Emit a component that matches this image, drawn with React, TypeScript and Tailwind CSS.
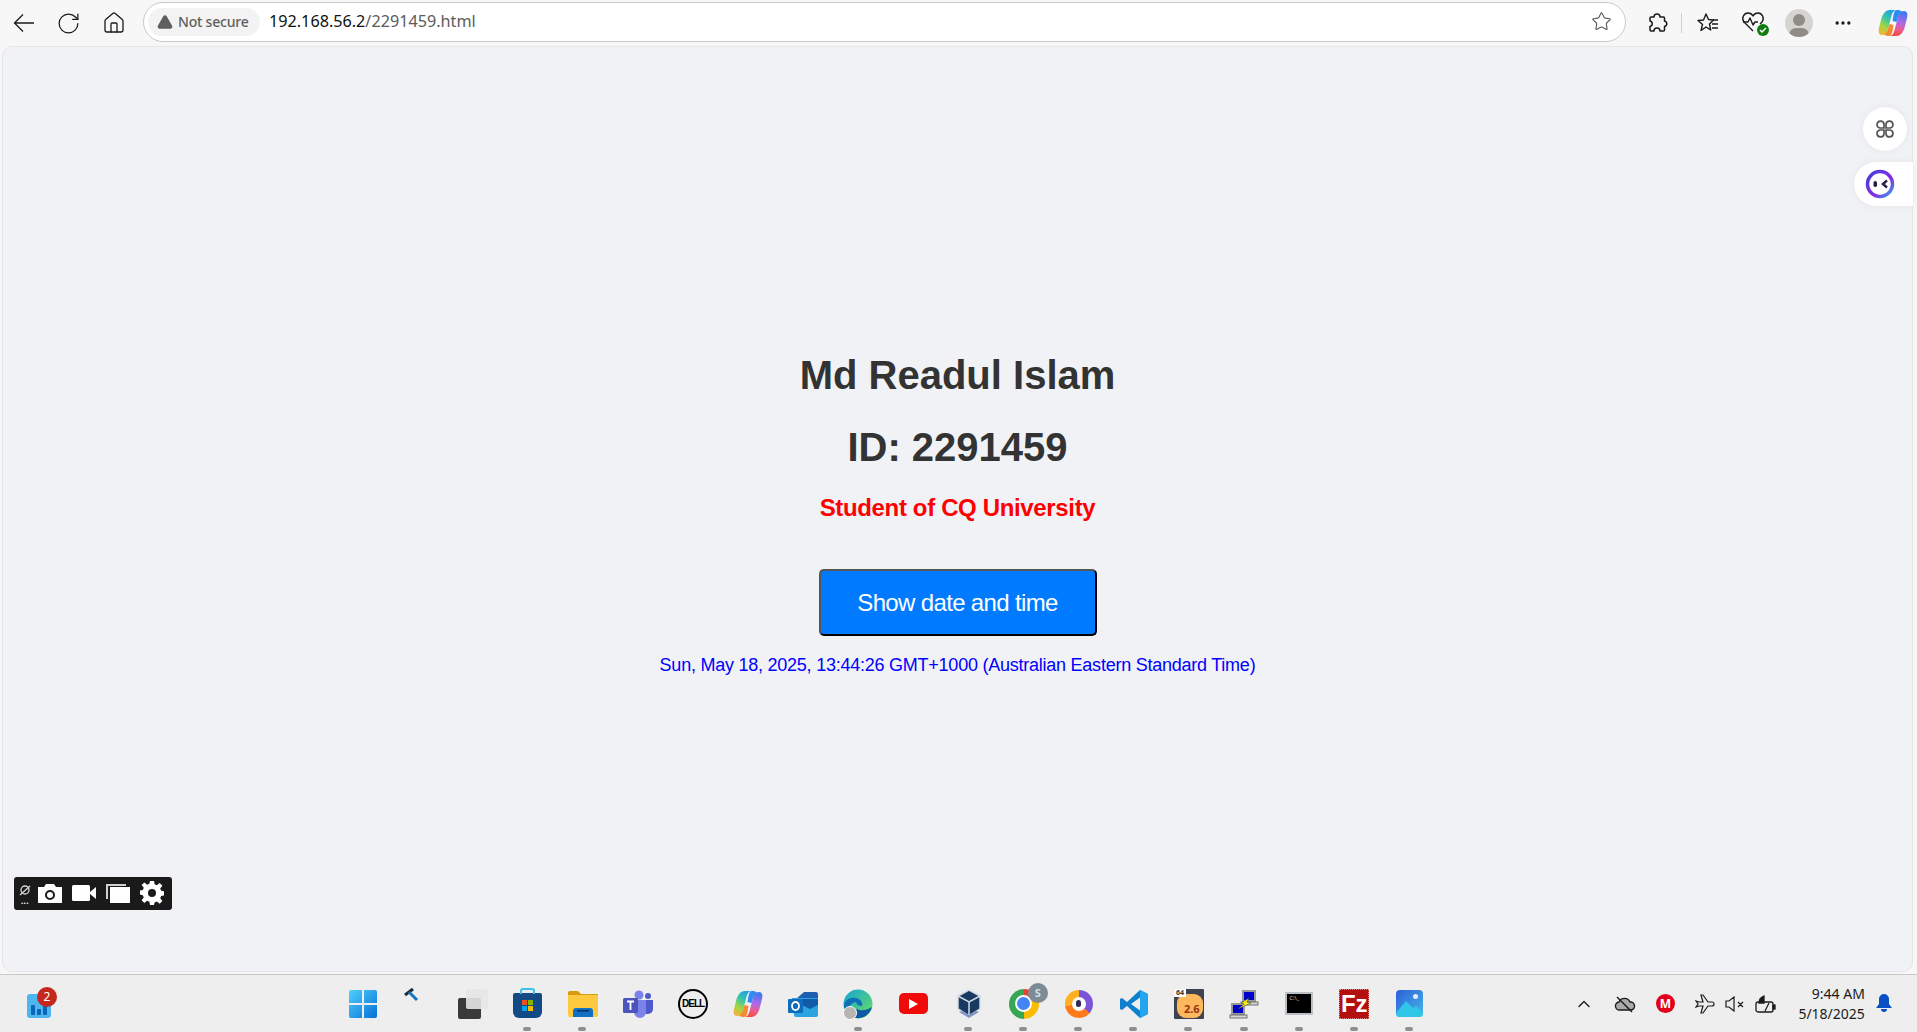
import { ChevronUp, Ellipsis, Home, RotateCw, Star, TriangleAlert } from "lucide-react";
import type { ReactNode } from "react";

function Cell({ dot, children }: { dot?: boolean; children: ReactNode }) {
  return (
    <div className="relative w-[55.1px] h-[58px] flex items-center justify-center shrink-0">
      {children}
      {dot && <span className="absolute bottom-[2px] left-[23px] w-[8px] h-[4px] rounded-full bg-[#8f8f8f]" />}
    </div>
  );
}

function CopilotLogo({ size = 30 }: { size?: number }) {
  return (
    <svg width={size} height={size} viewBox="0 0 30 30">
      <defs>
        <linearGradient id="cpa" x1="0.7" y1="0" x2="0.2" y2="1">
          <stop offset="0" stopColor="#1f9fe8" />
          <stop offset="0.4" stopColor="#3fc8a0" />
          <stop offset="0.7" stopColor="#a6d63e" />
          <stop offset="1" stopColor="#f7b13a" />
        </linearGradient>
        <linearGradient id="cpb" x1="0.6" y1="0" x2="0.4" y2="1">
          <stop offset="0" stopColor="#3a78ee" />
          <stop offset="0.45" stopColor="#b068e8" />
          <stop offset="0.75" stopColor="#ef5a8a" />
          <stop offset="1" stopColor="#f24a3a" />
        </linearGradient>
      </defs>
      <path d="M12 2h7c-3 0-4.500 2-5.300 5L10 21c-.8 3-2.500 6-6 6-3 0-4-3-3-7l2-8c1-5 4-10 9-10z" fill="url(#cpa)" />
      <path d="M18 28h-7c3 0 4.500-2 5.300-5L20 9c.8-3 2.500-6 6-6 3 0 4 3 3 7l-2 8c-1 5-4 10-9 10z" fill="url(#cpb)" />
      <path d="M19 2c2.500 0 4 .6 5 2-2 .5-3.200 2.500-4 5l-1.500 5-4-1 1-6c.6-3 1.500-5 3.500-5z" fill="#2c8cf0" />
      <path d="M11 28c-2.500 0-4-.6-5-2 2-.5 3.200-2.500 4-5l1.500-5 4 1-1 6c-.6 3-1.500 5-3.500 5z" fill="#f58a2e" />
    </svg>
  );
}

function BrowserBar() {
  return (
    <header className="h-[46px] flex items-center shrink-0 text-[#1b1b1b]">
      <div className="w-[45px] ml-[1px] flex justify-center">
        <svg width="22" height="20" viewBox="0 0 22 20" fill="none" stroke="#1b1b1b" strokeWidth="1.300">
          <path d="M21 10H1.500M10 1.500L1.500 10l8.500 8.500" />
        </svg>
      </div>
      <div className="w-[45px] flex justify-center"><RotateCw size={25} strokeWidth={1.2} /></div>
      <div className="w-[45px] flex justify-center"><Home size={24} strokeWidth={1.3} /></div>
      <div className="ml-[7px] w-[1483px] h-[40px] mt-[-3px] rounded-full bg-white border border-[#c9c9c9] flex items-center pl-[4px] pr-[13px]">
        <div className="h-[28px] w-[112px] rounded-full bg-[#f3f3f3] flex items-center pl-[9px] gap-[5px] text-[#5f5f5f] text-[14px] font-medium whitespace-nowrap">
          <TriangleAlert size={16} fill="#5f5f5f" stroke="#5f5f5f" className="shrink-0" />
          <span className="tracking-[-0.2px]">Not secure</span>
        </div>
        <div className="ml-[9px] text-[16.2px] text-[#5b5b5b]">
          <span className="text-[#111111]">192.168.56.2</span>/2291459.html
        </div>
        <Star size={21} strokeWidth={1.3} className="ml-auto text-[#5c5c5c]" />
      </div>
      <div className="ml-[20px] w-[22px] flex justify-center">
        <svg width="22" height="22" viewBox="0 0 22 22" fill="none" stroke="#1b1b1b" strokeWidth="1.5" strokeLinejoin="round">
          <path d="M8 5a3 3 0 0 1 6 0h3.500a1 1 0 0 1 1 1v3a2.800 2.800 0 0 1 0 5.500V18a1 1 0 0 1-1 1H14a3 3 0 0 0-6 0H5a1 1 0 0 1-1-1v-3.500a2.800 2.800 0 0 0 0-5.500V6a1 1 0 0 1 1-1z" />
        </svg>
      </div>
      <div className="ml-[13px] w-px h-[20px] bg-[#d0d0d0]" />
      <div className="ml-[14px] w-[24px]">
        <svg width="24" height="22" viewBox="0 0 24 22" fill="none" stroke="#1b1b1b" strokeWidth="1.4" strokeLinejoin="round">
          <path d="M10 2l2.500 5.500 5 .5-4 4 1.200 6L10 15l-5 3.500 1.500-6-4.500-4 5.500-.5z" />
          <path d="M17 8h5M16 12h6M16 16h6" />
        </svg>
      </div>
      <div className="ml-[21px] relative w-[26px] h-[26px]">
        <svg width="24" height="22" viewBox="0 0 24 22" fill="none" stroke="#1b1b1b" strokeWidth="1.4" strokeLinejoin="round" className="mt-[1px]">
          <path d="M12 20L3 11C0 7 3 2 7 2c2 0 4 1 5 3 1-2 3-3 5-3 4 0 7 5 4 9l-2 2" />
          <path d="M2 11h5l2-4 3 7 2-3h3" />
        </svg>
        <span className="absolute right-[-2px] bottom-[0px] w-[12px] h-[12px] rounded-full bg-[#107c10] flex items-center justify-center">
          <svg width="8" height="8" viewBox="0 0 8 8" fill="none" stroke="white" strokeWidth="1.500"><path d="M1 4l2 2 4-4" /></svg>
        </span>
      </div>
      <div className="ml-[18px] w-[28px] h-[28px] rounded-full bg-[#d6d4d1] relative overflow-hidden">
        <span className="absolute left-[8px] top-[5px] w-[12px] h-[12px] rounded-full bg-[#8f8b87]" />
        <span className="absolute left-[4px] top-[19px] w-[20px] h-[14px] rounded-full bg-[#8f8b87]" />
      </div>
      <div className="ml-[18px] w-[24px] flex justify-center"><Ellipsis size={20} strokeWidth={2} /></div>
      <div className="ml-[23px]"><CopilotLogo /></div>
    </header>
  );
}

function CaptureToolbar() {
  return (
    <div className="absolute left-[14px] top-[877px] w-[158px] h-[33px] rounded-[3px] bg-[#1a1a1a] flex items-center pl-[5px] gap-[7px]">
      <div className="w-[12px] flex flex-col items-center gap-[2px]">
        <svg width="12" height="12" viewBox="0 0 12 12" fill="none" stroke="#d8d8d8" strokeWidth="1.300"><circle cx="6" cy="6" r="4" /><path d="M1 11l10-9" /></svg>
        <span className="text-[8px] leading-[5px] font-bold text-white tracking-[0.5px]">...</span>
      </div>
      <svg width="24" height="20" viewBox="0 0 24 20" fill="white" className="mt-[-2px]">
        <path fillRule="evenodd" d="M0 4h6l2-3h8l2 3h6v16H0zM12 7a5 5 0 1 0 0 10 5 5 0 0 0 0-10zm0 2a3 3 0 1 1 0 6 3 3 0 0 1 0-6z" />
      </svg>
      <svg width="24" height="16" viewBox="0 0 24 16" fill="white" className="ml-[3px] mt-[-2px]"><rect width="18" height="16" rx="1.500" /><path d="M18 7l6-5v12l-6-5z" /></svg>
      <svg width="24" height="20" viewBox="0 0 24 20" className="ml-[3px] mt-[-2px]">
        <path d="M0 1h20v2H2v13H0z" fill="#d0d0d0" />
        <rect x="4" y="4" width="20" height="16" fill="white" />
      </svg>
      <svg width="24" height="24" viewBox="0 0 24 24" fill="white" className="ml-[3px] mt-[-2px]">
        <path fillRule="evenodd" d="M10 0h4l.6 3.200 2.300 1L19.600 2l2.800 2.800-2.200 2.700 1 2.300 3.200.6v4l-3.200.6-1 2.300 2.200 2.700-2.800 2.800-2.700-2.200-2.300 1L14 24h-4l-.6-3.200-2.300-1L4.400 22l-2.800-2.800 2.200-2.700-1-2.300L0 13.600v-4l2.800-.6 1-2.300L1.600 4 4.400 1.600l2.700 2.200 2.300-1zM12 8a4 4 0 1 0 0 8 4 4 0 0 0 0-8z" />
      </svg>
    </div>
  );
}

function SideButtons() {
  return (
    <>
      <div className="absolute left-[1863px] top-[107px] w-[44px] h-[44px] rounded-full bg-white shadow-[0_0_8px_rgba(0,0,0,0.06)] flex items-center justify-center">
        <svg width="20" height="20" viewBox="0 0 20 20" fill="none" stroke="#555555" strokeWidth="1.700">
          <path d="M9 9H5a3.500 3.500 0 1 1 4-4zM11 9h4a3.500 3.500 0 1 0-4-4zM9 11H5a3.500 3.500 0 1 0 4 4zM11 11h4a3.500 3.500 0 1 1-4 4z" />
        </svg>
      </div>
      <div className="absolute left-[1854px] top-[162px] w-[59px] h-[44px] rounded-l-full bg-white shadow-[0_0_8px_rgba(0,0,0,0.06)] flex items-center pl-[11px]">
        <svg width="30" height="30" viewBox="0 0 30 30">
          <defs>
            <linearGradient id="ring" x1="0" y1="0" x2="1" y2="1">
              <stop offset="0" stopColor="#3f3fe0" />
              <stop offset="0.6" stopColor="#8a2be2" />
              <stop offset="1" stopColor="#2ea8e8" />
            </linearGradient>
          </defs>
          <circle cx="15" cy="15" r="12.500" fill="white" stroke="url(#ring)" strokeWidth="3.500" />
          <rect x="8.500" y="12" width="3.500" height="6" rx="1.700" fill="#222244" />
          <path d="M22 11.500l-4 3.500 4 3.500" fill="none" stroke="#222244" strokeWidth="2.400" />
        </svg>
      </div>
    </>
  );
}

function Taskbar() {
  return (
    <footer className="h-[58px] shrink-0 bg-[#eeeeee] border-t border-[#c8c8c8] flex items-center">
      <div className="ml-[27px] relative w-[24px] h-[24px] mt-[4px] rounded-[3px] bg-[#4db5f0] flex items-end justify-center gap-[2px] pb-[3px]">
        <span className="w-[4px] h-[10px] bg-[#0a66b8] rounded-[1px]" />
        <span className="w-[4px] h-[6px] bg-[#0a66b8] rounded-[1px]" />
        <span className="w-[4px] h-[14px] bg-[#0a66b8] rounded-[1px]" />
        <span className="absolute left-[10px] top-[-7px] w-[20px] h-[20px] rounded-full bg-[#c4281c] text-white text-[12px] leading-[20px] text-center font-['Noto_Sans',sans-serif]">2</span>
      </div>
      <div className="ml-[284px] flex">
        <Cell>
          <svg width="30" height="30" viewBox="0 0 30 30">
            <defs><linearGradient id="win" x1="0" y1="0" x2="1" y2="1"><stop offset="0" stopColor="#4fd0fb" /><stop offset="1" stopColor="#0670d6" /></linearGradient></defs>
            <path d="M1 3a2 2 0 0 1 2-2h11v13H1zM16 1h11a2 2 0 0 1 2 2v11H16zM1 16h13v13H3a2 2 0 0 1-2-2zM16 16h13v11a2 2 0 0 1-2 2H16z" fill="url(#win)" />
          </svg>
        </Cell>
        <Cell>
          <svg width="16" height="16" viewBox="0 0 16 16" className="mt-[-18px] ml-[-12px]" fill="none" strokeWidth="3">
            <path d="M1 8l8-6" stroke="#1f2a3a" /><path d="M5 5l8 8" stroke="#1273c4" />
          </svg>
        </Cell>
        <Cell>
          <div className="relative w-[30px] h-[30px]">
            <span className="absolute left-0 bottom-0 w-[23px] h-[21px] rounded-[2px] bg-[#3a3a3a]" />
            <span className="absolute right-0 top-0 w-[22px] h-[20px] rounded-[2px] bg-[#e6e6e6]/90" />
          </div>
        </Cell>
        <Cell dot>
          <div className="relative w-[29px] h-[25px] mt-[4px] rounded-b-[6px] rounded-t-[2px] bg-[#134a86] flex items-center justify-center">
            <span className="absolute left-[7px] top-[-5px] w-[15px] h-[6px] border-2 border-b-0 border-[#38c0f0] rounded-t-[3px]" />
            <div className="grid grid-cols-2 gap-[1px] w-[11px] h-[11px]">
              <span className="bg-[#f25022]" /><span className="bg-[#7fba00]" /><span className="bg-[#00a4ef]" /><span className="bg-[#ffb900]" />
            </div>
          </div>
        </Cell>
        <Cell dot>
          <svg width="30" height="27" viewBox="0 0 30 27">
            <path d="M0 3a2 2 0 0 1 2-2h8l3 3h17v4H0z" fill="#d99a0b" />
            <path d="M0 5h30v20a2 2 0 0 1-2 2H2a2 2 0 0 1-2-2z" fill="#fcc93f" />
            <path d="M5 27v-6a3 3 0 0 1 3-3h14a3 3 0 0 1 3 3v6z" fill="#0f70c4" />
            <rect x="9" y="20" width="12" height="1.500" fill="#052f5a" />
          </svg>
        </Cell>
        <Cell>
          <svg width="30" height="28" viewBox="0 0 30 28">
            <circle cx="16" cy="5" r="4.500" fill="#7b83eb" /><circle cx="25" cy="6" r="3" fill="#5059c9" />
            <path d="M20 10h10v9a5 5 0 0 1-5 5h-5z" fill="#5059c9" />
            <path d="M8 10h15v12a6 6 0 0 1-12 0z" fill="#7b83eb" />
            <rect y="8" width="15" height="15" rx="1.500" fill="#4b53bc" />
            <path d="M4 11.500h7M7.500 11.500V20" stroke="white" strokeWidth="1.800" />
          </svg>
        </Cell>
        <Cell>
          <div className="w-[30px] h-[30px] rounded-full border-2 border-black flex items-center justify-center font-['Liberation_Sans',sans-serif] font-bold text-[10px] tracking-[-1px] text-black">DELL</div>
        </Cell>
        <Cell><CopilotLogo /></Cell>
        <Cell>
          <svg width="30" height="26" viewBox="0 0 30 26">
            <path d="M8 8l8-7h12a2 2 0 0 1 2 2v5z" fill="#1e5fb0" />
            <path d="M4 7h26v17a2 2 0 0 1-2 2H8a2 2 0 0 1-2-2z" fill="#2aa3e0" />
            <path d="M14 8h16v6l-8 4-8-4z" fill="#125aa8" />
            <rect y="8" width="15" height="14" rx="1" fill="#0f6cbd" />
            <ellipse cx="7.500" cy="15" rx="3.500" ry="4" fill="none" stroke="white" strokeWidth="1.800" />
          </svg>
        </Cell>
        <Cell dot>
          <div className="relative">
            <svg width="30" height="30" viewBox="0 0 30 30">
              <defs><linearGradient id="edge" x1="0" y1="0" x2="1" y2="1"><stop offset="0" stopColor="#12a4d8" /><stop offset="1" stopColor="#6fe05a" /></linearGradient></defs>
              <circle cx="15" cy="15" r="14.500" fill="url(#edge)" />
              <path d="M1 16C2 10 8 8 13 9c5 1 7 5 6 8-3 0-5-1-6-4-5 1-9 4-6 13-4-2-6-6-6-10z" fill="#0f6fb8" />
              <path d="M14 20c3 2 9 2 15-2-2 7-8 12-16 11-3-1-2-6 1-9z" fill="#0c59a4" />
            </svg>
            <span className="absolute left-[0px] bottom-[-1px] w-[14px] h-[14px] rounded-full bg-[#b8b4b0] border border-white" />
          </div>
        </Cell>
        <Cell>
          <div className="w-[29px] h-[21px] rounded-[5px] bg-[#f00a0a] flex items-center justify-center">
            <svg width="9" height="10" viewBox="0 0 9 10" fill="white"><path d="M0 0l9 5-9 5z" /></svg>
          </div>
        </Cell>
        <Cell dot>
          <svg width="28" height="31" viewBox="0 0 28 31">
            <path d="M3 8l11-6 11 6v13l-11 7-11-7z" fill="#183a61" stroke="#d3dbe6" strokeWidth="1.500" />
            <path d="M3 8l11 6 11-6M14 14v14" stroke="#d3dbe6" strokeWidth="1.500" fill="none" />
            <path d="M4 24l10 6 10-6-3-1-7 4-7-4z" fill="#7f94c8" />
          </svg>
        </Cell>
        <Cell dot>
          <div className="relative">
            <div className="w-[30px] h-[30px] rounded-full bg-[conic-gradient(#ea4335_-60deg,#ea4335_60deg,#fbbc05_60deg,#fbbc05_180deg,#34a853_180deg,#34a853_300deg)] flex items-center justify-center">
              <span className="w-[13px] h-[13px] rounded-full bg-[#4285f4] border-2 border-white box-content" />
            </div>
            <span className="absolute right-[-9px] top-[-6px] w-[20px] h-[20px] rounded-full bg-[#7d8b96] text-[#d6dde2] text-[11px] leading-[20px] text-center font-bold">S</span>
          </div>
        </Cell>
        <Cell dot>
          <div className="w-[28px] h-[28px] rounded-full bg-[conic-gradient(#7a55d8_0deg,#7a55d8_130deg,#ff7a1a_130deg,#ff7a1a_260deg,#ffb01f_260deg,#ffb01f_360deg)] flex items-center justify-center">
            <span className="w-[14px] h-[14px] rounded-full bg-white flex items-center justify-center"><span className="w-[5px] h-[7px] rounded-full bg-[#33275c]" /></span>
          </div>
        </Cell>
        <Cell dot>
          <svg width="30" height="30" viewBox="0 0 30 30">
            <path d="M21 1l8 4v20l-8 4-13-12-5 4-2-1V10l2-1 5 4z" fill="#0e7fcf" />
            <path d="M21 1l8 4v20l-8 4z" fill="#22a4ee" />
            <path d="M21 8.500L12 15l9 6.500z" fill="#eeeeee" />
          </svg>
        </Cell>
        <Cell dot>
          <div className="relative w-[30px] h-[30px] bg-[#3f4350] rounded-[1px] overflow-hidden">
            <span className="absolute left-[3px] top-[5px] w-[26px] h-[24px] rounded-[9px] bg-[#fcb85c]" />
            <span className="absolute left-[10px] top-[13px] text-[11px] leading-[14px] font-bold text-[#9a3412]">2.6</span>
            <span className="absolute left-0 top-0 w-[12px] h-[8px] bg-white text-[7px] leading-[8px] text-center text-[#333333] font-bold">64</span>
          </div>
        </Cell>
        <Cell dot>
          <svg width="30" height="30" viewBox="0 0 30 30">
            <rect x="14" y="2" width="12" height="10" fill="#0000cc" stroke="#9a9a9a" strokeWidth="2" />
            <rect x="12" y="13" width="17" height="3" fill="#d6d6d6" stroke="#555555" strokeWidth="0.800" />
            <rect x="3" y="15" width="12" height="10" fill="#0000cc" stroke="#9a9a9a" strokeWidth="2" />
            <rect x="1" y="26" width="17" height="3" fill="#d6d6d6" stroke="#555555" strokeWidth="0.800" />
            <path d="M20 9l-8 5 3 1-6 5 13-6-4-1z" fill="#f5e71c" stroke="#333333" strokeWidth="0.500" />
          </svg>
        </Cell>
        <Cell dot>
          <div className="w-[28px] h-[23px] bg-black border-2 border-[#b9bec4] rounded-[1px] px-[2px]">
            <span className="block text-[#d0d0d0] text-[6px] leading-[8px]">C:\_</span>
          </div>
        </Cell>
        <Cell dot>
          <div className="w-[30px] h-[30px] bg-[#b30f0f] border border-dotted border-[#e08a8a] flex items-center justify-center text-white text-[24px] leading-none font-bold font-['Liberation_Sans',sans-serif]">Fz</div>
        </Cell>
        <Cell dot>
          <svg width="27" height="27" viewBox="0 0 27 27">
            <defs><linearGradient id="pho" x1="0" y1="0" x2="1" y2="1"><stop offset="0" stopColor="#2e5fd8" /><stop offset="1" stopColor="#45b8ea" /></linearGradient></defs>
            <rect width="27" height="27" rx="4" fill="url(#pho)" />
            <circle cx="19.500" cy="6.500" r="2.500" fill="#e4ecfb" />
            <path d="M0 23l10-12 7 7 3-2 7 7v0a4 4 0 0 1-4 4H4a4 4 0 0 1-4-4z" fill="#2fc6e8" />
          </svg>
        </Cell>
      </div>
      <div className="ml-[137px] flex items-center h-full text-[#1b1b1b]">
        <ChevronUp size={20} strokeWidth={1.6} />
        <svg width="22" height="18" viewBox="0 0 22 18" fill="none" stroke="#1b1b1b" strokeWidth="1.400" className="ml-[20px]">
          <path d="M6 15a4 4 0 0 1-1-8 6 6 0 0 1 11 0 4 4 0 0 1 1 8z" fill="#aaaaaa" /><path d="M3 2l15 15" />
        </svg>
        <span className="ml-[20px] w-[19px] h-[19px] rounded-full bg-[#e2001a] text-white text-[12px] leading-[19px] text-center font-bold">M</span>
        <svg width="20" height="20" viewBox="0 0 20 20" fill="none" stroke="#1b1b1b" strokeWidth="1.200" className="ml-[20px]">
          <path d="M1 7l2 3-2 3 3-1h4l-2 7h2l5-7h4a2 2 0 0 0 0-4h-4L8 1H6l2 7H4z" />
        </svg>
        <svg width="20" height="16" viewBox="0 0 20 16" fill="none" stroke="#1b1b1b" strokeWidth="1.200" className="ml-[10px]">
          <path d="M1 5h3l5-4v14l-5-4H1zM13 6l5 5M18 6l-5 5" />
        </svg>
        <svg width="21" height="18" viewBox="0 0 21 18" fill="none" stroke="#1b1b1b" strokeWidth="1.300" className="ml-[10px]">
          <rect x="1" y="7" width="17" height="10" rx="2" /><rect x="18" y="10" width="2" height="4" fill="#1b1b1b" /><path d="M9 8L4 8c0-3 2-6 5-7z" fill="#1b1b1b" /><path d="M10 16l4-8" stroke="#1b1b1b" />
        </svg>
        <div className="ml-[10px] w-[79px] text-right text-[14px] leading-[20px] text-[#1b1b1b] whitespace-nowrap">
          <div>9:44 AM</div>
          <div>5/18/2025</div>
        </div>
        <svg width="18" height="19" viewBox="0 0 18 19" fill="#0a4fc4" className="ml-[10px]">
          <path d="M9 0a5 5 0 0 1 5 5v5l3 4H1l3-4V5a5 5 0 0 1 5-5zM6 15h6a3 3 0 0 1-6 0z" />
        </svg>
      </div>
    </footer>
  );
}

export default function App() {
  return (
    <div className="relative w-[1917px] h-[1032px] overflow-hidden flex flex-col bg-[#f7f7f7] font-['Noto_Sans',sans-serif]">
      <BrowserBar />
      <main className="flex-1 ml-[2px] mr-[4px] mb-[2px] rounded-[10px] border border-[#e6e6e8] bg-[#f1f2f6] flex flex-col items-center pt-[305px] font-['Liberation_Sans',sans-serif]">
        <h1 className="text-[40px] leading-[46px] font-bold text-[#333333]">Md Readul Islam</h1>
        <h2 className="mt-[26px] text-[40px] leading-[46px] font-bold text-[#333333]">ID: 2291459</h2>
        <p className="mt-[24px] text-[24px] leading-[28px] font-bold tracking-[-0.35px] text-[#ff0000]">Student of CQ University</p>
        <button className="mt-[47px] w-[278px] h-[67px] rounded-[5px] bg-[#007bff] border-2 border-t-[#555555] border-l-[#555555] border-r-black border-b-black text-white text-[24px] tracking-[-0.65px]">
          Show date and time
        </button>
        <p className="mt-[19px] text-[18px] leading-[21px] tracking-[-0.24px] text-[#0000ff]">Sun, May 18, 2025, 13:44:26 GMT+1000 (Australian Eastern Standard Time)</p>
      </main>
      <Taskbar />
      <CaptureToolbar />
      <SideButtons />
    </div>
  );
}
